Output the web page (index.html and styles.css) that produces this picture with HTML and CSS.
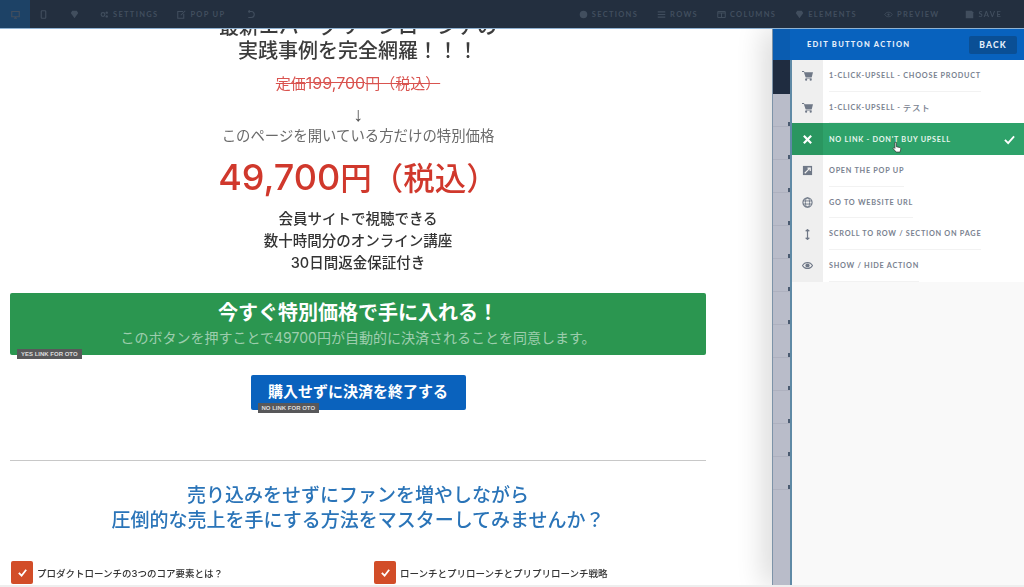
FILE: index.html
```html
<!DOCTYPE html>
<html lang="ja">
<head>
    <meta charset="UTF-8">
    <meta name="viewport" content="width=device-width, initial-scale=1.0">
    <title>ページエディター</title>
    <link rel="stylesheet" href="styles.css">
</head>
<body>
    <div class="app">
        <!-- top toolbar -->
        <header class="topbar">
            <div class="tool-group">
                <div class="tool tool-device active"><svg class="ico" viewBox="0 0 12 12"><path d="M1 2h10v7H1zM4 11h4M6 9v2" fill="none" stroke="currentColor" stroke-width="1.6"/></svg></div>
                <div class="tool tool-device"><svg class="ico" viewBox="0 0 12 12"><rect x="3" y="1" width="6" height="10" rx="1" fill="none" stroke="currentColor" stroke-width="1.5"/></svg></div>
                <div class="tool tool-heart"><svg class="ico" viewBox="0 0 12 12"><path d="M6 11 1 4l2-3h6l2 3z" fill="currentColor"/></svg></div>
                <div class="tool tool-settings"><svg class="ico" viewBox="0 0 12 12"><circle cx="4" cy="6" r="2.5" fill="none" stroke="currentColor" stroke-width="1.5"/><circle cx="9" cy="3.5" r="1.6" fill="currentColor"/><circle cx="9" cy="8.5" r="1.6" fill="currentColor"/></svg>SETTINGS</div>
                <div class="tool tool-popup"><svg class="ico" viewBox="0 0 12 12"><path d="M8 2H1v9h8V5M5 7l6-6" fill="none" stroke="currentColor" stroke-width="1.4"/></svg>POP UP</div>
                <div class="tool tool-undo"><svg class="ico" viewBox="0 0 12 12"><path d="M3 2h4a3.500 3.500 0 0 1 0 8H3M3 2l2-1.500M3 2l2 1.500" fill="none" stroke="currentColor" stroke-width="1.4"/></svg></div>
            </div>
            <div class="tool-group tool-group-right">
                <div class="tool"><svg class="ico" viewBox="0 0 12 12"><circle cx="6" cy="6" r="5" fill="currentColor"/></svg>SECTIONS</div>
                <div class="tool"><svg class="ico" viewBox="0 0 12 12"><path d="M1 2.500h10M1 6h10M1 9.500h10" stroke="currentColor" stroke-width="1.5"/></svg>ROWS</div>
                <div class="tool"><svg class="ico" viewBox="0 0 12 12"><path d="M1 2h10v8H1zM1 4h10M6 4v6" fill="none" stroke="currentColor" stroke-width="1.3"/></svg>COLUMNS</div>
                <div class="tool"><svg class="ico" viewBox="0 0 12 12"><path d="M6 11 1 4l2-3h6l2 3z" fill="currentColor"/></svg>ELEMENTS</div>
                <div class="tool tool-preview"><svg class="ico" viewBox="0 0 12 12"><path d="M1 6c2-4 8-4 10 0-2 4-8 4-10 0z" fill="none" stroke="currentColor" stroke-width="1.2"/><circle cx="6" cy="6" r="1.500" fill="currentColor"/></svg>PREVIEW</div>
                <div class="tool tool-save"><svg class="ico" viewBox="0 0 12 12"><path d="M1 1h8l2 2v8H1z" fill="currentColor"/></svg>SAVE</div>
            </div>
        </header>

        <main class="workspace">
            <!-- page being edited -->
            <section class="page">
                <h2 class="lead">最新エバーグリーンローンチの<br>実践事例を完全網羅！！！</h2>
                <p class="old-price">定価<span class="old-num">199,700</span>円（税込）</p>
                <p class="arrow">↓</p>
                <p class="sub">このページを開いている方だけの特別価格</p>
                <p class="price"><span class="price-num">49,700</span>円（税込）</p>
                <p class="perks">会員サイトで視聴できる<br>数十時間分のオンライン講座<br>30日間返金保証付き</p>

                <div class="buy-btn">
                    <div class="buy-title">今すぐ特別価格で手に入れる！</div>
                    <div class="buy-note">このボタンを押すことで49700円が自動的に決済されることを同意します。</div>
                    <span class="tag tag-yes">YES LINK FOR OTO</span>
                </div>

                <div class="skip-wrap">
                    <div class="skip-btn">購入せずに決済を終了する<span class="tag tag-no">NO LINK FOR OTO</span></div>
                </div>

                <hr class="rule">

                <h2 class="pitch">売り込みをせずにファンを増やしながら<br>圧倒的な売上を手にする方法をマスターしてみませんか？</h2>

                <div class="checks">
                    <div class="check-item"><span class="check-box"><svg viewBox="0 0 12 12"><path d="M2 6.500 5 9.500 10 3" fill="none" stroke="#fff" stroke-width="2"/></svg></span>プロダクトローンチの3つのコア要素とは？</div>
                    <div class="check-item"><span class="check-box"><svg viewBox="0 0 12 12"><path d="M2 6.500 5 9.500 10 3" fill="none" stroke="#fff" stroke-width="2"/></svg></span>ローンチとプリローンチとプリプリローンチ戦略</div>
                </div>
            </section>

            <!-- collapsed editor panel behind the action list -->
            <div class="strip">
                <div class="strip-head"></div>
                <div class="strip-dark"></div>
                <div class="strip-row"></div>
                <div class="strip-row"></div>
                <div class="strip-row"></div>
                <div class="strip-row"></div>
                <div class="strip-row"></div>
                <div class="strip-row"></div>
                <div class="strip-row"></div>
                <div class="strip-row"></div>
                <div class="strip-row"></div>
                <div class="strip-row"></div>
                <div class="strip-row"></div>
                <div class="strip-row"></div>
            </div>

            <aside class="panel">
                <div class="panel-head">
                    <span>EDIT BUTTON ACTION</span>
                    <span class="back">BACK</span>
                </div>
                <ul class="actions">
                    <li class="action">
                        <span class="action-icon"><svg class="aico" viewBox="0 0 12 12"><path d="M0 1h2.200l.4 1.500H12l-1.300 5H3.800L2 2.200H0zM4 8.300h6.500v1H4z" fill="currentColor"/><circle cx="4.500" cy="10.500" r="1.200" fill="currentColor"/><circle cx="9.500" cy="10.500" r="1.200" fill="currentColor"/></svg></span>
                        <span class="action-text">1-CLICK-UPSELL - CHOOSE PRODUCT</span>
                    </li>
                    <li class="action">
                        <span class="action-icon"><svg class="aico" viewBox="0 0 12 12"><path d="M0 1h2.200l.4 1.500H12l-1.300 5H3.800L2 2.200H0zM4 8.300h6.500v1H4z" fill="currentColor"/><circle cx="4.500" cy="10.500" r="1.200" fill="currentColor"/><circle cx="9.500" cy="10.500" r="1.200" fill="currentColor"/></svg></span>
                        <span class="action-text">1-CLICK-UPSELL - <span class="kana">テスト</span></span>
                    </li>
                    <li class="action selected">
                        <span class="action-icon"><svg class="aico" viewBox="0 0 12 12"><path d="M2 2l8 8M10 2l-8 8" stroke="currentColor" stroke-width="2.400"/></svg></span>
                        <span class="action-text">NO LINK - DON'T BUY UPSELL</span>
                        <svg class="action-check" viewBox="0 0 12 12"><path d="M1 6.500 4.500 10 11 2.500" fill="none" stroke="currentColor" stroke-width="2"/></svg>
                        <svg class="cursor" viewBox="0 0 12 14"><path d="M3.500 1c1-.6 1.700 0 1.700 1v4l4 1c1 .3 1.500 1 1.300 2l-.8 3.500H5L1.500 8.500c-.5-1 .5-1.800 1.500-1l.5.500z" fill="#fff" stroke="#333" stroke-width=".9"/></svg>
                    </li>
                    <li class="action">
                        <span class="action-icon"><svg class="aico" viewBox="0 0 12 12"><path d="M1 1h10v10H1z" fill="currentColor"/><path d="M3 9l5-5M6 3.500h3v3" fill="none" stroke="#efefef" stroke-width="1.300"/></svg></span>
                        <span class="action-text">OPEN THE POP UP</span>
                    </li>
                    <li class="action">
                        <span class="action-icon"><svg class="aico" viewBox="0 0 12 12"><circle cx="6" cy="6" r="5" fill="none" stroke="currentColor" stroke-width="1.200"/><ellipse cx="6" cy="6" rx="2.300" ry="5" fill="none" stroke="currentColor"/><path d="M1 4.300h10M1 7.700h10" stroke="currentColor"/></svg></span>
                        <span class="action-text">GO TO WEBSITE URL</span>
                    </li>
                    <li class="action">
                        <span class="action-icon"><svg class="aico" viewBox="0 0 12 12"><path d="M6 1v10M4 2.500 6 .7l2 1.800M4 9.500l2 1.800 2-1.800" fill="none" stroke="currentColor" stroke-width="1.300"/></svg></span>
                        <span class="action-text">SCROLL TO ROW / SECTION ON PAGE</span>
                    </li>
                    <li class="action">
                        <span class="action-icon"><svg class="aico" viewBox="0 0 12 12"><path d="M.5 6c2.500-4.500 8.500-4.500 11 0-2.500 4.500-8.500 4.500-11 0z" fill="none" stroke="currentColor" stroke-width="1.100"/><circle cx="6" cy="6" r="2.300" fill="currentColor"/></svg></span>
                        <span class="action-text">SHOW / HIDE ACTION</span>
                    </li>
                </ul>
            </aside>
        </main>
        <div class="bottom-edge"></div>
    </div>
</body>
</html>
```

FILE: styles.css
```css
* {
    box-sizing: border-box;
}
html, body {
    margin: 0;
    height: 100%;
    overflow: hidden;
    background: #fff;
}
body {
    font-family: Inter, "Noto Sans CJK JP", sans-serif;
}
.app {
    height: 587px;
    display: flex;
    flex-direction: column;
    filter: blur(0.45px);
}

/* toolbar */
.topbar {
    height: 29px;
    flex: none;
    display: flex;
    justify-content: space-between;
    background-color: #232f3f;
    border-bottom: 1px solid #8fb2d2;
    color: #414e5e;
    font-family: Lato, sans-serif;
    font-size: 7.5px;
    font-weight: 700;
    letter-spacing: 1.3px;
}
.tool-group {
    display: flex;
    align-items: center;
}
.tool-group-right {
    gap: 19px;
    padding-right: 22px;
}
.tool {
    height: 100%;
    display: flex;
    align-items: center;
    gap: 4px;
}
.tool-device {
    width: 27px;
    justify-content: center;
}
.tool-device.active {
    width: 30px;
    background-color: #1d4266;
}
.tool-heart {
    margin-left: 4px;
    width: 26px;
    justify-content: center;
}
.tool-settings {
    margin-left: 13px;
}
.tool-popup {
    margin-left: 19px;
}
.tool-undo {
    margin-left: 21px;
}
.tool-preview {
    margin-left: 8px;
}
.tool-save {
    margin-left: 7px;
}
.ico {
    width: 9px;
    height: 9px;
    flex: none;
}

.workspace {
    flex: 1;
    min-height: 0;
    display: flex;
    overflow: hidden;
}

/* edited page */
.page {
    width: 772px;
    flex: none;
    height: 100%;
    overflow: hidden;
    padding: 0 66px 0 10px;
    text-align: center;
    color: #333;
}
.page p {
    margin: 0;
}
.lead {
    margin: -14px 0 0;
    font-size: 20px;
    line-height: 24px;
    font-weight: 500;
    color: #3c3c3c;
}
.page .old-price {
    margin-top: 8px;
    font-size: 15px;
    line-height: 24px;
    color: #d9534f;
    text-decoration: line-through;
}
.old-num {
    font-size: 16px;
}
.page .arrow {
    margin-top: 7px;
    font-family: "Liberation Sans", sans-serif;
    font-size: 20px;
    line-height: 22px;
    color: #555;
}
.sub {
    font-size: 14.400px;
    line-height: 22px;
    color: #6a6a6a;
}
.page .price {
    margin-top: 8px;
    font-size: 31.500px;
    line-height: 44px;
    font-weight: 500;
    color: #d0382c;
}
.price-num {
    font-size: 36px;
}
.page .perks {
    margin-top: 7px;
    font-size: 14.500px;
    line-height: 22px;
    font-weight: 500;
    color: #333;
}
.buy-btn {
    position: relative;
    height: 62px;
    margin-top: 19px;
    padding-top: 8px;
    background-color: #2b9650;
    border-radius: 2px;
    color: #fff;
}
.buy-title {
    font-size: 20px;
    line-height: 24px;
    font-weight: 700;
}
.buy-note {
    margin-top: 2px;
    font-size: 14px;
    line-height: 22px;
    color: rgba(255, 255, 255, 0.55);
}
.skip-wrap {
    margin-top: 20px;
    display: flex;
    justify-content: center;
}
.skip-btn {
    position: relative;
    width: 215px;
    height: 35px;
    line-height: 34px;
    background-color: #0a62bd;
    border-radius: 2px;
    color: #fff;
    font-size: 15px;
    font-weight: 700;
}
.tag {
    position: absolute;
    height: 10px;
    line-height: 10px;
    padding: 0 4px;
    background-color: #58585a;
    color: #ddd;
    font-family: "Liberation Sans", sans-serif;
    font-size: 6px;
    font-weight: 700;
    white-space: nowrap;
}
.tag-yes {
    left: 7px;
    bottom: -4px;
}
.tag-no {
    left: 7px;
    bottom: -3px;
}
.rule {
    margin: 50px 0 0;
    border: none;
    height: 1px;
    background-color: #c8c8c8;
}
.pitch {
    margin: 22px 0 0;
    font-size: 19px;
    line-height: 25px;
    font-weight: 500;
    color: #2a74b8;
}
.checks {
    margin-top: 28px;
    display: flex;
    text-align: left;
}
.check-item {
    width: 363px;
    flex: none;
    display: flex;
    align-items: center;
    gap: 4px;
    padding-left: 1px;
    font-size: 9.500px;
    font-weight: 500;
    color: #333;
}
.check-box {
    width: 22px;
    height: 23px;
    flex: none;
    display: flex;
    align-items: center;
    justify-content: center;
    background-color: #d24d28;
    border-radius: 2px;
}
.check-box svg {
    width: 11px;
    height: 11px;
}

/* strip of the panel underneath */
.strip {
    position: relative;
    z-index: 1;
    width: 20px;
    flex: none;
    background-color: #b9bcc9;
    border-left: 1px solid #7d93a8;
    border-right: 2px solid #5f8aa6;
    box-shadow: -4px 0 30px rgba(0, 0, 0, 0.22);
}
.strip-head {
    height: 31px;
    background-color: #0a5cb0;
}
.strip-dark {
    height: 34px;
    background-color: #1f2c40;
}
.strip-row {
    height: 33px;
    border-bottom: 1px solid #aeb1bf;
    display: flex;
    justify-content: flex-end;
    align-items: flex-end;
}
.strip-row::after {
    content: "";
    width: 2px;
    height: 4px;
    background-color: #4a5a70;
}

/* action list */
.panel {
    position: relative;
    z-index: 2;
    flex: 1;
    display: flex;
    flex-direction: column;
    background-color: #f9f9f9;
    font-family: Lato, "Noto Sans CJK JP", sans-serif;
    font-weight: 700;
}
.panel-head {
    height: 31px;
    flex: none;
    display: flex;
    align-items: center;
    justify-content: space-between;
    margin-left: -2px;
    padding: 0 7px 0 17px;
    background-color: #0862be;
    color: #e4eefa;
    font-size: 7.500px;
    font-weight: 900;
    letter-spacing: 1.300px;
}
.back {
    width: 48px;
    height: 18px;
    line-height: 18px;
    text-align: center;
    background-color: #0a4f95;
    border-radius: 2px;
    font-size: 8.500px;
    letter-spacing: 1.200px;
}
.actions {
    margin: 0;
    padding: 0;
    list-style: none;
    background-color: #fff;
}
.action {
    position: relative;
    height: 31.700px;
    display: flex;
    align-items: center;
    color: #7a8290;
    font-size: 7.300px;
    letter-spacing: 0.730px;
}
.kana {
    font-size: 8.500px;
    font-weight: 500;
    margin-left: 2px;
}
.action-icon {
    width: 31px;
    height: 100%;
    flex: none;
    display: flex;
    align-items: center;
    justify-content: center;
    background-color: #efefef;
    color: #6f7887;
}
.aico {
    width: 11px;
    height: 11px;
}
.action-text {
    margin-left: 6px;
    height: 100%;
    display: flex;
    align-items: center;
    border-bottom: 1px solid #f2f2f2;
    white-space: nowrap;
}
.action.selected {
    background-color: #2ea26a;
    color: #e8f6ee;
}
.action.selected .action-icon {
    background-color: #2a9660;
    color: #fff;
}
.action.selected .action-text {
    border-bottom: none;
}
.action-check {
    position: absolute;
    right: 9px;
    top: 11px;
    width: 11px;
    height: 11px;
    color: #fff;
}
.cursor {
    position: absolute;
    left: 100px;
    top: 18px;
    width: 10px;
    height: 13px;
}
.bottom-edge {
    height: 2px;
    flex: none;
    background-color: #eee;
}
```
